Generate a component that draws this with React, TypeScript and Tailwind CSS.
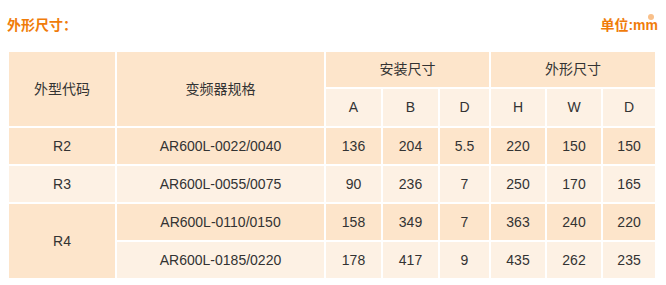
import React from "react";

const dark = "bg-[#fde5cb]";
const light = "bg-[#fdf1e4]";

const rows = [
  { code: "R2", span: 1, spec: "AR600L-0022/0040", vals: ["136", "204", "5.5", "220", "150", "150"], bg: dark },
  { code: "R3", span: 1, spec: "AR600L-0055/0075", vals: ["90", "236", "7", "250", "170", "165"], bg: light },
  { code: "R4", span: 2, spec: "AR600L-0110/0150", vals: ["158", "349", "7", "363", "240", "220"], bg: dark },
  { code: null, span: 0, spec: "AR600L-0185/0220", vals: ["178", "417", "9", "435", "262", "235"], bg: light },
];

const App = () => {
  return (
    <div
      className="relative w-[666px] h-[285px] bg-white overflow-hidden text-[#333]"
      style={{ fontFamily: '"Liberation Sans", "Noto Sans CJK SC", sans-serif' }}
    >
      {/* decorative dot top right */}
      <span className="absolute left-[648px] top-[14px] w-[6px] h-[6px] rounded-full bg-[#f9c08a]" />

      <div className="flex justify-between items-center px-[7px] pt-[17px] h-[33px] text-[14px] leading-[16px] font-bold text-[#f07c0a]">
        <span>外形尺寸：</span>
        <span className="mr-[1px]">单位:mm</span>
      </div>

      <table className="ml-[7px] mt-[17px] w-[650px] table-fixed border-separate border-spacing-[2px] text-[14px] text-center">
        <colgroup>
          <col className="w-[106px]" />
          <col className="w-[207px]" />
          <col className="w-[55px]" />
          <col className="w-[55px]" />
          <col className="w-[49px]" />
          <col className="w-[54px]" />
          <col className="w-[54px]" />
          <col className="w-[52px]" />
        </colgroup>
        <thead>
          <tr className="h-[35px]">
            <th rowSpan={2} className={`${dark} font-normal p-0`}>外型代码</th>
            <th rowSpan={2} className={`${dark} font-normal p-0`}>变频器规格</th>
            <th colSpan={3} className={`${dark} font-normal p-0`}>安装尺寸</th>
            <th colSpan={3} className={`${dark} font-normal p-0`}>外形尺寸</th>
          </tr>
          <tr className="h-[37px]">
            {["A", "B", "D", "H", "W", "D"].map((h, i) => (
              <th key={i} className={`${light} font-normal p-0`}>
                {h}
              </th>
            ))}
          </tr>
        </thead>
        <tbody>
          {rows.map((r, i) => (
            <tr key={i} className="h-[36px]">
              {r.code && (
                <td rowSpan={r.span} className={`${r.span > 1 ? dark : r.bg} p-0`}>
                  {r.code}
                </td>
              )}
              <td className={`${r.bg} p-0`}>{r.spec}</td>
              {r.vals.map((v, j) => (
                <td key={j} className={`${r.bg} p-0`}>
                  {v}
                </td>
              ))}
            </tr>
          ))}
        </tbody>
      </table>
    </div>
  );
};

export default App;
